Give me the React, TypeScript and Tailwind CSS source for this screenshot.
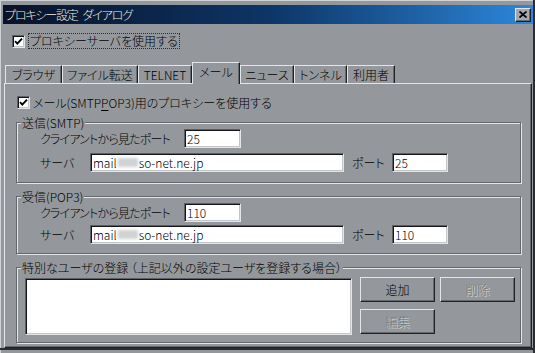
import type { ReactNode } from 'react';

const raised =
  'border border-t-[#e2e6e8] border-l-[#e2e6e8] border-r-[#1f2123] border-b-[#1f2123] shadow-[inset_-1px_-1px_0_#666a6e]';
const sunken =
  'border border-t-[#5c6064] border-l-[#5c6064] border-r-[#e2e6e8] border-b-[#e2e6e8] shadow-[inset_1px_1px_0_#141516,inset_-1px_-1px_0_#c2c6c9] bg-white';

const CheckBox = () => (
  <span className={`w-[13px] h-[13px] shrink-0 flex items-center justify-center ${sunken}`}>
    <svg width="9" height="9" viewBox="0 0 9 9">
      <path d="M1 4.2 L3.3 6.6 L8 1.6" fill="none" stroke="#000" strokeWidth="1.9" />
    </svg>
  </span>
);

const Field = ({ className, children }: { className: string; children: ReactNode }) => (
  <div className={`h-[19px] pl-[2px] flex items-center whitespace-nowrap ${sunken} ${className}`}>{children}</div>
);

const Group = ({ label, className, children }: { label: string; className: string; children: ReactNode }) => (
  <div
    className={`relative ml-[11px] w-[505px] border border-[#64686c] shadow-[inset_1px_1px_0_#e2e6e8,1px_1px_0_#e2e6e8] ${className}`}
  >
    <span className="absolute left-[4px] -top-[7px] px-[1px] bg-[#94989c] leading-[13px] whitespace-nowrap">{label}</span>
    {children}
  </div>
);

const Server = () => (
  <>
    mail
    <span className="inline-block w-[20px] h-[9px] mx-[1px] bg-[#cfd1d3] blur-[1.5px]" />
    so-net.ne.jp
  </>
);

const tabs = [
  { name: 'ブラウザ', w: 'w-[57px]' },
  { name: 'ファイル転送', w: 'w-[76px]' },
  { name: 'TELNET', w: 'w-[54px]' },
  { name: 'メール', w: 'w-[48px]', active: true },
  { name: 'ニュース', w: 'w-[54px]' },
  { name: 'トンネル', w: 'w-[53px]' },
  { name: '利用者', w: 'w-[48px]' },
];

export default function App() {
  return (
    <div className="w-[535px] h-[353px] overflow-hidden bg-[#94989c] border-r-2 border-r-[#2a2c2e] text-[12px] leading-none font-light text-black font-['Noto_Sans_CJK_JP','Noto_Sans_CJK_SC',sans-serif] [font-feature-settings:'palt'] shadow-[inset_1px_1px_0_#cfd3d6]">
      {/* title bar */}
      <div className="mt-[5px] ml-[3px] w-[530px] h-[19px] pl-[2px] pr-[2px] flex items-center justify-between bg-linear-to-r from-[#07122a] via-[#0d3566] to-[#2c88dc]">
        <span className="text-[#f3f0da] tracking-[-1.2px] flex gap-[5px]">
          <span>プロキシー設定</span>
          <span>ダイアログ</span>
        </span>
        <span className={`w-[16px] h-[14px] flex items-center justify-center bg-[#a4a8ac] ${raised}`}>
          <svg width="8" height="7" viewBox="0 0 8 7">
            <path d="M0.5 0.5 L7.5 6.5 M7.5 0.5 L0.5 6.5" stroke="#000" strokeWidth="1.7" />
          </svg>
        </span>
      </div>

      {/* main checkbox */}
      <div className="mt-[9px] ml-[12px] h-[16px] flex items-center gap-[3px]">
        <CheckBox />
        <span className="h-[16px] px-[1px] flex items-center border border-dotted border-[#2a2c2e]">プロキシーサーバを使用する</span>
      </div>

      {/* tabs */}
      <div className="mt-[13px] ml-[5px] h-[21px] flex items-end">
        {tabs.map((t) =>
          t.active ? (
            <div
              key={t.name}
              className={`${t.w} h-[22px] -mb-px relative z-10 pb-[3px] bg-[#94989c] flex items-center justify-center border-t border-l border-r border-t-[#e2e6e8] border-l-[#e2e6e8] border-r-[#1f2123] shadow-[inset_-1px_0_0_#666a6e]`}
            >
              {t.name}
            </div>
          ) : (
            <div
              key={t.name}
              className={`${t.w} h-[18px] flex items-center justify-center border-t border-l border-r border-t-[#e2e6e8] border-l-[#e2e6e8] border-r-[#1f2123] shadow-[inset_-1px_0_0_#666a6e]`}
            >
              {t.name}
            </div>
          ),
        )}
      </div>

      {/* panel */}
      <div className="ml-[4px] w-[528px] h-[265px] flex flex-col border border-t-[#e2e6e8] border-l-[#e2e6e8] border-r-[#1f2123] border-b-[#1f2123] shadow-[inset_-1px_-1px_0_#666a6e]">
        <div className="mt-[12px] ml-[12px] h-[13px] flex items-center gap-[3px]">
          <CheckBox />
          <span>
            メール(SMTP<span className="underline underline-offset-2">P</span>OP3)用のプロキシーを使用する
          </span>
        </div>

        <Group label="送信(SMTP)" className="mt-[13px] h-[61px] pt-[6px] pl-[23px]">
          <div className="h-[19px] flex items-center">
            <span className="w-[144px] tracking-[-0.8px]">クライアントから見たポート</span>
            <Field className="w-[57px]">25</Field>
          </div>
          <div className="mt-[5px] h-[19px] flex items-center">
            <span className="w-[50px]">サーバ</span>
            <Field className="w-[254px]">
              <Server />
            </Field>
            <span className="ml-[8px] w-[40px]">ポート</span>
            <Field className="w-[56px]">25</Field>
          </div>
        </Group>

        <Group label="受信(POP3)" className="mt-[13px] h-[58px] pt-[6px] pl-[23px]">
          <div className="h-[19px] flex items-center">
            <span className="w-[144px] tracking-[-0.8px]">クライアントから見たポート</span>
            <Field className="w-[57px]">110</Field>
          </div>
          <div className="mt-[3px] h-[19px] flex items-center">
            <span className="w-[50px]">サーバ</span>
            <Field className="w-[254px]">
              <Server />
            </Field>
            <span className="ml-[8px] w-[40px]">ポート</span>
            <Field className="w-[56px]">110</Field>
          </div>
        </Group>

        <Group
          label="特別なユーザの登録 （上記以外の設定ユーザを登録する場合）"
          className="mt-[13px] h-[76px] pt-[10px] pl-[8px] flex items-start"
        >
          <div className={`w-[327px] h-[57px] ${sunken}`} />
          <div className="ml-[8px] -mt-px grid grid-cols-2 gap-x-[5px] gap-y-[7px]">
            <button className={`w-[75px] h-[25px] bg-[#94989c] ${raised}`}>追加</button>
            <button className={`w-[75px] h-[25px] bg-[#94989c] text-[#74787c] [text-shadow:1px_1px_0_#d8dcdf] ${raised}`}>
              削除
            </button>
            <button className={`w-[75px] h-[25px] bg-[#94989c] text-[#74787c] [text-shadow:1px_1px_0_#d8dcdf] ${raised}`}>
              編集
            </button>
          </div>
        </Group>
      </div>
      <div className="h-[2px] bg-[#2a2c2e]" />
    </div>
  );
}
